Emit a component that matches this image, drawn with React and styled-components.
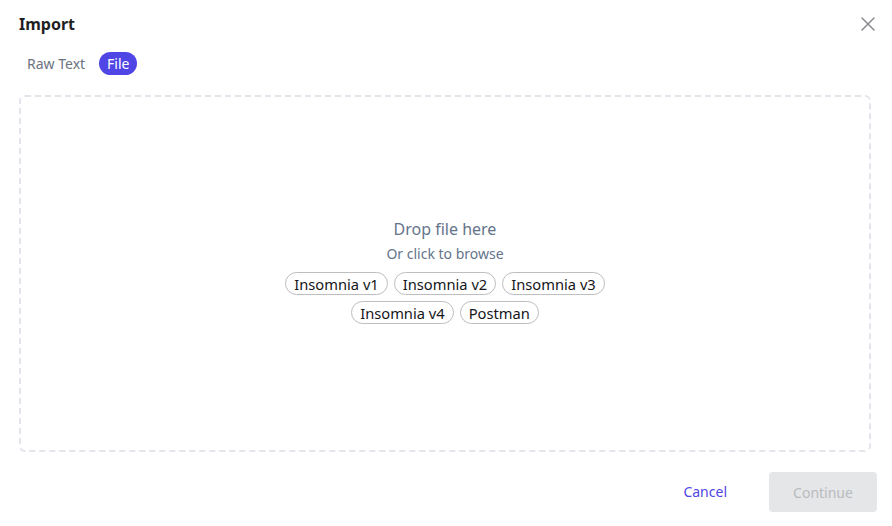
import React, { useState } from 'react';
import styled, { createGlobalStyle } from 'styled-components';

const GlobalStyle = createGlobalStyle`
  html, body {
    margin: 0;
    padding: 0;
    background: #ffffff;
    font-family: "Noto Sans", "Open Sans", sans-serif;
  }
  * { box-sizing: border-box; }
`;

const Modal = styled.div`
  width: 892px;
  height: 526px;
  display: flex;
  flex-direction: column;
  background: #fff;
`;

const Header = styled.div`
  display: flex;
  align-items: center;
  justify-content: space-between;
  padding: 12px 12px 0 19px;
  height: 36px;
`;

const Title = styled.h2`
  margin: 0;
  font-size: 16px;
  font-weight: 700;
  color: #1f1f24;
`;

const CloseButton = styled.button`
  width: 24px;
  height: 24px;
  display: flex;
  align-items: center;
  justify-content: center;
  padding: 0;
  background: transparent;
  border: none;
  color: #8a8a8f;
  cursor: pointer;
`;

const Tabs = styled.div`
  display: flex;
  align-items: center;
  gap: 6px;
  padding: 16px 19px 0 19px;
`;

const Tab = styled.button`
  height: 23px;
  padding: 0 8px;
  border: none;
  border-radius: 999px;
  font-family: inherit;
  font-size: 14px;
  line-height: 23px;
  cursor: pointer;
  background: ${p => (p.$active ? '#4f46e5' : 'transparent')};
  color: ${p => (p.$active ? '#ffffff' : '#6b7280')};
`;

const DropZone = styled.div`
  margin: 20px 21px 0 19px;
  height: 357px;
  padding-bottom: 5px;
  border: 2px dashed #e4e4ec;
  border-radius: 6px;
  display: flex;
  flex-direction: column;
  align-items: center;
  justify-content: center;
  cursor: pointer;
`;

const DropTitle = styled.div`
  font-size: 16px;
  color: #64748b;
  line-height: 22px;
`;

const DropHint = styled.div`
  margin-top: 4px;
  font-size: 14px;
  color: #64748b;
  line-height: 20px;
`;

const ChipWrap = styled.div`
  margin-top: 8px;
  display: flex;
  flex-wrap: wrap;
  justify-content: center;
  gap: 6px;
  width: 340px;
`;

const Chip = styled.span`
  height: 23px;
  padding: 0 8px;
  display: inline-flex;
  align-items: center;
  border: 1px solid #bdbdc2;
  border-radius: 999px;
  font-size: 14.7px;
  color: #16161a;
`;

const Footer = styled.div`
  display: flex;
  justify-content: flex-end;
  align-items: center;
  gap: 18px;
  padding: 20px 15px 0 0;
`;

const CancelButton = styled.button`
  height: 40px;
  padding: 0 24px 2px;
  background: transparent;
  border: none;
  font-family: inherit;
  font-size: 14px;
  color: #4f46e5;
  cursor: pointer;
`;

const ContinueButton = styled.button`
  width: 108px;
  height: 40px;
  background: #e5e6e8;
  border: none;
  border-radius: 4px;
  font-family: inherit;
  font-size: 14px;
  color: #b9bbc0;
`;

const formats = ['Insomnia v1', 'Insomnia v2', 'Insomnia v3', 'Insomnia v4', 'Postman'];

export default function App() {
  const [tab, setTab] = useState('file');

  return (
    <>
      <GlobalStyle />
      <Modal>
        <Header>
          <Title>Import</Title>
          <CloseButton aria-label="Close">
            <svg width="14" height="14" viewBox="0 0 14 14" fill="none" stroke="currentColor" strokeWidth="1.5" strokeLinecap="round">
              <path d="M1 1 L13 13 M13 1 L1 13" />
            </svg>
          </CloseButton>
        </Header>
        <Tabs>
          <Tab $active={tab === 'raw'} onClick={() => setTab('raw')}>Raw Text</Tab>
          <Tab $active={tab === 'file'} onClick={() => setTab('file')}>File</Tab>
        </Tabs>
        <DropZone>
          <DropTitle>Drop file here</DropTitle>
          <DropHint>Or click to browse</DropHint>
          <ChipWrap>
            {formats.map(f => (
              <Chip key={f}>{f}</Chip>
            ))}
          </ChipWrap>
        </DropZone>
        <Footer>
          <CancelButton>Cancel</CancelButton>
          <ContinueButton disabled>Continue</ContinueButton>
        </Footer>
      </Modal>
    </>
  );
}
